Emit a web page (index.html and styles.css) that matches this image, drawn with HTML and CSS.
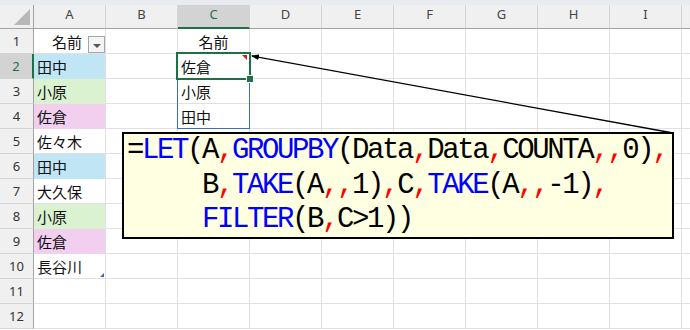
FILE: index.html
```html
<!DOCTYPE html>
<html lang="ja">
<head>
    <meta charset="UTF-8">
    <title>GROUPBY</title>
    <link rel="stylesheet" href="styles.css">
</head>
<body>
    <div class="sheet">
        <div class="topbar"></div>
        <div class="grid">
            <!-- 列見出し -->
            <div class="corner"><span class="corner-mark"></span></div>
            <div class="colhead">A</div><div class="colhead">B</div><div class="colhead sel">C</div><div class="colhead">D</div><div class="colhead">E</div>
            <div class="colhead">F</div><div class="colhead">G</div><div class="colhead">H</div><div class="colhead">I</div><div class="colhead"></div>

            <div class="rowhead">1</div>
            <div class="cell head-cell"><span class="head-text">名前</span><span class="filter-btn"></span></div>
            <div class="cell"></div><div class="cell center">名前</div>
            <div class="cell"></div><div class="cell"></div><div class="cell"></div><div class="cell"></div><div class="cell"></div><div class="cell"></div><div class="cell"></div>

            <div class="rowhead sel">2</div>
            <div class="cell blue">田中</div><div class="cell"></div><div class="cell note">佐倉</div>
            <div class="cell"></div><div class="cell"></div><div class="cell"></div><div class="cell"></div><div class="cell"></div><div class="cell"></div><div class="cell"></div>

            <div class="rowhead">3</div>
            <div class="cell green">小原</div><div class="cell"></div><div class="cell">小原</div>
            <div class="cell"></div><div class="cell"></div><div class="cell"></div><div class="cell"></div><div class="cell"></div><div class="cell"></div><div class="cell"></div>

            <div class="rowhead">4</div>
            <div class="cell pink">佐倉</div><div class="cell"></div><div class="cell">田中</div>
            <div class="cell"></div><div class="cell"></div><div class="cell"></div><div class="cell"></div><div class="cell"></div><div class="cell"></div><div class="cell"></div>

            <div class="rowhead">5</div>
            <div class="cell">佐々木</div><div class="cell"></div><div class="cell"></div>
            <div class="cell"></div><div class="cell"></div><div class="cell"></div><div class="cell"></div><div class="cell"></div><div class="cell"></div><div class="cell"></div>

            <div class="rowhead">6</div>
            <div class="cell blue">田中</div><div class="cell"></div><div class="cell"></div>
            <div class="cell"></div><div class="cell"></div><div class="cell"></div><div class="cell"></div><div class="cell"></div><div class="cell"></div><div class="cell"></div>

            <div class="rowhead">7</div>
            <div class="cell">大久保</div><div class="cell"></div><div class="cell"></div>
            <div class="cell"></div><div class="cell"></div><div class="cell"></div><div class="cell"></div><div class="cell"></div><div class="cell"></div><div class="cell"></div>

            <div class="rowhead">8</div>
            <div class="cell green">小原</div><div class="cell"></div><div class="cell"></div>
            <div class="cell"></div><div class="cell"></div><div class="cell"></div><div class="cell"></div><div class="cell"></div><div class="cell"></div><div class="cell"></div>

            <div class="rowhead">9</div>
            <div class="cell pink">佐倉</div><div class="cell"></div><div class="cell"></div>
            <div class="cell"></div><div class="cell"></div><div class="cell"></div><div class="cell"></div><div class="cell"></div><div class="cell"></div><div class="cell"></div>

            <div class="rowhead">10</div>
            <div class="cell table-end">長谷川</div><div class="cell"></div><div class="cell"></div>
            <div class="cell"></div><div class="cell"></div><div class="cell"></div><div class="cell"></div><div class="cell"></div><div class="cell"></div><div class="cell"></div>

            <div class="rowhead">11</div>
            <div class="cell"></div><div class="cell"></div><div class="cell"></div>
            <div class="cell"></div><div class="cell"></div><div class="cell"></div><div class="cell"></div><div class="cell"></div><div class="cell"></div><div class="cell"></div>

            <div class="rowhead">12</div>
            <div class="cell"></div><div class="cell"></div><div class="cell"></div>
            <div class="cell"></div><div class="cell"></div><div class="cell"></div><div class="cell"></div><div class="cell"></div><div class="cell"></div><div class="cell"></div>
        </div>

        <!-- スピル範囲と選択セル -->
        <div class="spill"></div>
        <div class="selection"><span class="fill-handle"></span></div>

        <!-- 吹き出しの矢印 -->
        <svg class="arrow" width="690" height="330" viewBox="0 0 690 330">
            <defs>
                <marker id="head" markerWidth="8" markerHeight="6" refX="7" refY="3" orient="auto" markerUnits="userSpaceOnUse">
                    <path d="M0,0 L8,3 L0,6 z" fill="#000"/>
                </marker>
            </defs>
            <line x1="673" y1="133" x2="252" y2="56" stroke="#000" stroke-width="1.3" marker-end="url(#head)"/>
        </svg>

        <div class="formula">
            <div class="line">=<span class="fn">LET</span>(A<span class="sep">,</span><span class="fn">GROUPBY</span>(Data<span class="sep">,</span>Data<span class="sep">,</span>COUNTA<span class="sep">,,</span>0)<span class="sep">,</span></div>
            <div class="line">     B<span class="sep">,</span><span class="fn">TAKE</span>(A<span class="sep">,,</span>1)<span class="sep">,</span>C<span class="sep">,</span><span class="fn">TAKE</span>(A<span class="sep">,,</span>-1)<span class="sep">,</span></div>
            <div class="line">     <span class="fn">FILTER</span>(B<span class="sep">,</span>C&gt;1))</div>
        </div>
    </div>
</body>
</html>
```

FILE: styles.css
```css
:root {
    --grid-line: #e1e1e1;
    --head-bg: #f0f0f0;
    --head-line: #a3a3a3;
    --head-sep: #d4d4d4;
    --sel-bg: #d3d3d3;
    --excel-green: #1e7145;
    --spill-blue: #3c6fc4;
}

body {
    margin: 0;
    background: #fff;
    font-family: "Noto Sans CJK JP", sans-serif;
    overflow: hidden;
}

.sheet {
    position: relative;
    width: 690px;
    height: 330px;
    overflow: hidden;
}

.topbar {
    height: 5px;
    background: #e8ebef;
}

.grid {
    display: grid;
    grid-template-columns: 34px repeat(10, 72px);
    grid-template-rows: 24px;
    grid-auto-rows: 25px;
}

.grid > div {
    box-sizing: border-box;
}

.corner {
    background: var(--head-bg);
    border-right: 1px solid var(--head-line);
    border-bottom: 1px solid var(--head-line);
    display: flex;
    justify-content: flex-end;
    align-items: flex-end;
    padding: 0 3px 3px 0;
}

.corner-mark {
    width: 16px;
    height: 16px;
    background: #b8b8b8;
    clip-path: polygon(100% 0, 100% 100%, 0 100%);
}

.colhead {
    background: var(--head-bg);
    border-right: 1px solid var(--head-sep);
    border-bottom: 1px solid var(--head-line);
    font-family: "Noto Sans", sans-serif;
    font-size: 13px;
    line-height: 18px;
    color: #444;
    text-align: center;
}

.colhead.sel {
    background: var(--sel-bg);
    color: var(--excel-green);
    border-bottom: 2px solid var(--excel-green);
}

.rowhead {
    background: var(--head-bg);
    border-right: 1px solid var(--head-line);
    border-bottom: 1px solid var(--head-sep);
    font-family: "Noto Sans", sans-serif;
    font-size: 13px;
    color: #333;
    display: flex;
    align-items: center;
    justify-content: center;
}

.rowhead.sel {
    background: var(--sel-bg);
    color: var(--excel-green);
    border-right: 2px solid var(--excel-green);
}

.cell {
    border-right: 1px solid var(--grid-line);
    border-bottom: 1px solid var(--grid-line);
    display: flex;
    align-items: center;
    padding-left: 3px;
    font-size: 15px;
    color: #111;
    white-space: nowrap;
    overflow: hidden;
}

.cell.center {
    justify-content: center;
    padding-left: 0;
}

.cell.blue {
    background: #c0e6f5;
    border-bottom-color: transparent;
}

.cell.green {
    background: #daf2d0;
    border-bottom-color: transparent;
}

.cell.pink {
    background: #f2ceef;
    border-bottom-color: transparent;
}

.head-cell {
    padding-left: 0;
    align-items: stretch;
}

.head-text {
    flex: 1;
    display: flex;
    align-items: center;
    justify-content: center;
    padding-left: 12px;
}

.filter-btn {
    align-self: flex-end;
    box-sizing: border-box;
    width: 17px;
    height: 17px;
    border: 1px solid #a6a6a6;
    background: #f4f4f4;
    display: flex;
    align-items: center;
    justify-content: center;
}

.filter-btn::before {
    content: "";
    border-left: 4px solid transparent;
    border-right: 4px solid transparent;
    border-top: 4px solid #555;
    margin-top: 2px;
}

.note,
.table-end {
    position: relative;
}

.note::after {
    content: "";
    position: absolute;
    top: 1px;
    right: 2px;
    width: 5px;
    height: 5px;
    background: #e81123;
    clip-path: polygon(0 0, 100% 0, 100% 100%);
}

.table-end::after {
    content: "";
    position: absolute;
    right: 1px;
    bottom: 1px;
    width: 4px;
    height: 4px;
    background: #4460b4;
    clip-path: polygon(100% 0, 100% 100%, 0 100%);
}

.spill {
    position: absolute;
    left: 177px;
    top: 53px;
    width: 73px;
    height: 76px;
    box-sizing: border-box;
    border: 1px solid var(--spill-blue);
}

.selection {
    position: absolute;
    left: 176px;
    top: 52px;
    width: 75px;
    height: 28px;
    box-sizing: border-box;
    border: 2px solid var(--excel-green);
}

.fill-handle {
    position: absolute;
    right: -5px;
    bottom: -5px;
    width: 6px;
    height: 6px;
    background: var(--excel-green);
    border: 1px solid #fff;
}

.arrow {
    position: absolute;
    left: 0;
    top: 0;
    pointer-events: none;
}

.formula {
    position: absolute;
    left: 122px;
    top: 132px;
    width: 552px;
    height: 107px;
    box-sizing: border-box;
    border: 2px solid #000;
    background: #ffffe1;
    padding: 0 0 0 3px;
    font-family: "Liberation Mono", monospace;
    font-size: 29px;
    letter-spacing: -2.4px;
    line-height: 34.5px;
    color: #000;
}

.line {
    white-space: pre;
}

.fn {
    color: #0000ff;
}

.sep {
    color: #ff0000;
}
```
